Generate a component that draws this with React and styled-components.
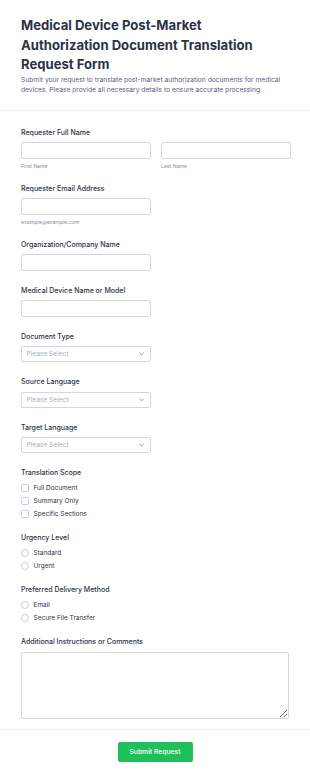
import React from 'react';
import styled, { createGlobalStyle } from 'styled-components';

const GlobalStyle = createGlobalStyle`
    html, body {
        margin: 0;
        padding: 0;
        background: #fff;
    }
    body {
        font-family: Inter, "Noto Sans", "Liberation Sans", sans-serif;
        color: #2c3345;
    }
    * { box-sizing: border-box; }
`;

const Page = styled.div`
    width: 310px;
    min-height: 777px;
    background: #fff;
`;

const Header = styled.header`
    padding: 16px 21px 15px;
    border-bottom: 1px solid #eceef2;
`;

const Title = styled.h1`
    margin: 0;
    font-size: 13.1px;
    line-height: 19.5px;
    font-weight: 700;
    color: #2c3345;
`;

const Subtitle = styled.p`
    margin: 0;
    font-size: 6.7px;
    line-height: 10px;
    color: #57647e;
`;

const Form = styled.form`
    padding: 17px 21px 0;
`;

const Field = styled.div`
    margin-bottom: ${p => p.$gap ?? 15}px;
`;

const Label = styled.div`
    font-size: 7px;
    line-height: 10px;
    font-weight: 500;
    color: #2c3345;
    margin-bottom: ${p => p.$mb ?? 4.5}px;
`;

const Row = styled.div`
    display: grid;
    grid-template-columns: 130px 130px;
    gap: 10px;
`;

const Input = styled.input`
    display: block;
    width: 130px;
    height: 16.5px;
    border: 1px solid #d3d6de;
    border-radius: 2px;
    background: #fff;
    padding: 0 4px;
    outline: none;
`;

const Sub = styled.div`
    margin-top: 3px;
    font-size: 5.2px;
    line-height: 8px;
    color: #8792a6;
`;

const SelectBox = styled.div`
    width: 130px;
    height: 16px;
    border: 1px solid #d3d6de;
    border-radius: 2px;
    display: flex;
    align-items: center;
    justify-content: space-between;
    padding: 0 6px 0 4.5px;
    font-size: 6.6px;
    color: #a8b0bf;
`;

const Option = styled.label`
    display: flex;
    align-items: center;
    height: 13px;
    font-size: 6.5px;
    color: #2c3345;
    gap: 4.5px;
`;

const Box = styled.span`
    width: 8px;
    height: 8px;
    border: 1px solid #c9ced9;
    border-radius: ${p => p.$round ? '50%' : '1.5px'};
    background: #fff;
    flex-shrink: 0;
`;

const TextArea = styled.textarea`
    display: block;
    width: 100%;
    height: 67px;
    border: 1px solid #d3d6de;
    border-radius: 2px;
    resize: both;
    outline: none;
    margin: 0;
    padding: 0;
`;

const Footer = styled.div`
    margin-top: 10px;
    border-top: 1px solid #eceef2;
    display: flex;
    justify-content: center;
    padding-top: 12px;
`;

const Button = styled.button`
    width: 75px;
    height: 20px;
    border: none;
    border-radius: 2px;
    background: #1fbf5b;
    color: #fff;
    font-family: inherit;
    font-size: 6.8px;
    font-weight: 500;
    padding: 0;
`;

const Chevron = () => (
    <svg width="5" height="4" viewBox="0 0 10 6" fill="none">
        <path d="M1.5 1.2 L5 4.6 L8.5 1.2" stroke="#6f7890" strokeWidth="1.6" strokeLinecap="round" strokeLinejoin="round" />
    </svg>
);

const Select = () => (
    <SelectBox>
        <span>Please Select</span>
        <Chevron />
    </SelectBox>
);

function ChoiceGroup({ label, options, round }) {
    return (
        <Field $gap={13}>
            <Label $mb={3}>{label}</Label>
            {options.map(o => (
                <Option key={o}>
                    <Box $round={round} />
                    {o}
                </Option>
            ))}
        </Field>
    );
}

export default function App() {
    return (
        <Page>
            <GlobalStyle />
            <Header>
                <Title>Medical Device Post-Market Authorization Document Translation Request Form</Title>
                <Subtitle>Submit your request to translate post-market authorization documents for medical devices. Please provide all necessary details to ensure accurate processing.</Subtitle>
            </Header>
            <Form onSubmit={e => e.preventDefault()}>
                <Field $gap={14}>
                    <Label>Requester Full Name</Label>
                    <Row>
                        <div>
                            <Input />
                            <Sub>First Name</Sub>
                        </div>
                        <div>
                            <Input />
                            <Sub>Last Name</Sub>
                        </div>
                    </Row>
                </Field>
                <Field $gap={14}>
                    <Label>Requester Email Address</Label>
                    <Input />
                    <Sub>example@example.com</Sub>
                </Field>
                <Field>
                    <Label>Organization/Company Name</Label>
                    <Input />
                </Field>
                <Field>
                    <Label>Medical Device Name or Model</Label>
                    <Input />
                </Field>
                <Field>
                    <Label>Document Type</Label>
                    <Select />
                </Field>
                <Field>
                    <Label>Source Language</Label>
                    <Select />
                </Field>
                <Field>
                    <Label>Target Language</Label>
                    <Select />
                </Field>
                <ChoiceGroup label="Translation Scope" options={['Full Document', 'Summary Only', 'Specific Sections']} />
                <ChoiceGroup label="Urgency Level" round options={['Standard', 'Urgent']} />
                <ChoiceGroup label="Preferred Delivery Method" round options={['Email', 'Secure File Transfer']} />
                <Field $gap={0}>
                    <Label>Additional Instructions or Comments</Label>
                    <TextArea />
                </Field>
            </Form>
            <Footer>
                <Button type="submit">Submit Request</Button>
            </Footer>
        </Page>
    );
}
